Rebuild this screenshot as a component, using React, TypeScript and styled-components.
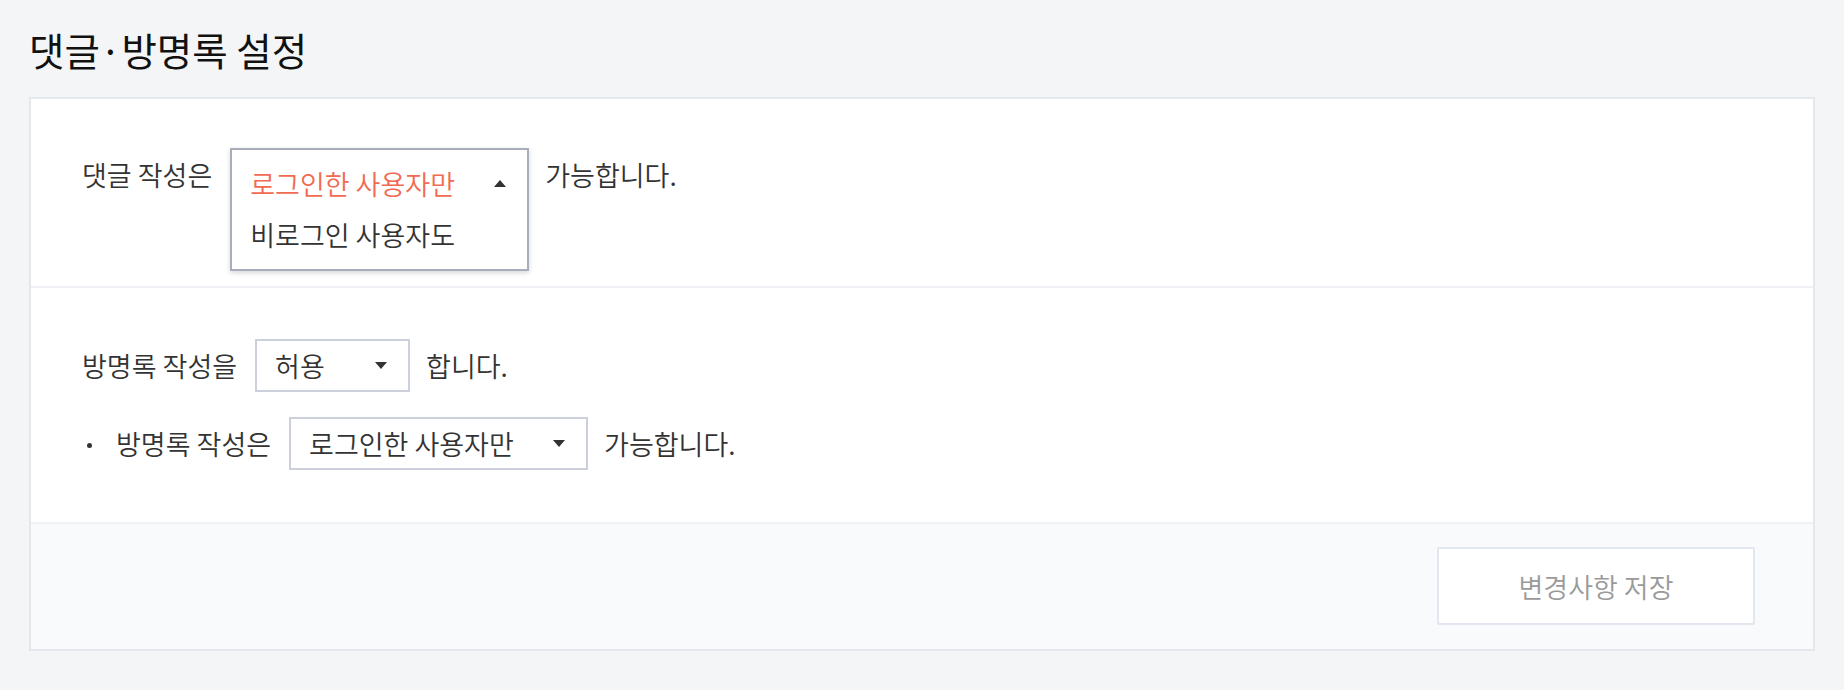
import React from 'react'
import styled, { createGlobalStyle } from 'styled-components'

const GlobalStyle = createGlobalStyle`
  html, body {
    margin: 0;
    padding: 0;
    background: #f4f5f7;
  }
  body {
    font-family: 'Noto Sans CJK KR', 'Noto Sans', sans-serif;
    font-weight: 350;
    color: #333;
  }
  * {
    box-sizing: border-box;
  }
`

const Page = styled.div`
  padding: 30px 29px 39px;
`

const Title = styled.h1`
  margin: 0 0 29px;
  font-size: 38.5px;
  line-height: 38px;
  font-weight: 400;
  color: #111;
`

const Card = styled.div`
  background: #fff;
  border: 2px solid #e4e7ed;
`

const Section = styled.div<{ $top: number; $bottom: number }>`
  padding: ${p => p.$top}px 51px ${p => p.$bottom}px;
  border-bottom: 2px solid #eff1f5;
`

const Row = styled.div<{ $gap?: number }>`
  display: flex;
  align-items: center;
  height: 53px;
  font-size: 27px;
  line-height: 1;
  color: #333;
  & + & {
    margin-top: ${p => p.$gap ?? 25}px;
  }
`

const Label = styled.span`
  margin-right: 18px;
  white-space: nowrap;
`

const After = styled.span`
  margin-left: 16px;
  white-space: nowrap;
`

const Bullet = styled.span`
  position: relative;
  width: 34px;
  height: 53px;
  flex: none;
  &::before {
    content: '';
    position: absolute;
    left: 5px;
    top: 26px;
    width: 5px;
    height: 5px;
    border-radius: 50%;
    background: #333;
  }
`

const SelectBox = styled.div<{ $width: number }>`
  display: flex;
  align-items: center;
  justify-content: space-between;
  width: ${p => p.$width}px;
  height: 53px;
  padding: 0 21px 0 18px;
  border: 2px solid #cbd0da;
  background: #fff;
  color: #333;
  white-space: nowrap;
  flex: none;
`

const SelectWrap = styled.div<{ $width: number }>`
  position: relative;
  width: ${p => p.$width}px;
  height: 53px;
  flex: none;
`

const OptionList = styled.ul`
  position: absolute;
  top: 0;
  left: 0;
  right: 0;
  margin: 0;
  padding: 8px 0 9px;
  list-style: none;
  background: #fff;
  border: 2px solid #a8adba;
  box-shadow: 0 2px 5px rgba(0, 0, 0, 0.16);
  z-index: 2;
`

const Option = styled.li<{ $active?: boolean }>`
  display: flex;
  align-items: center;
  justify-content: space-between;
  height: 51px;
  padding: 0 21px 0 18px;
  color: ${p => (p.$active ? '#f26a51' : '#333')};
  white-space: nowrap;
`

const Footer = styled.div`
  display: flex;
  justify-content: flex-end;
  padding: 23px 58px 24px;
  background: #f9fafc;
`

const SaveButton = styled.button`
  width: 318px;
  height: 78px;
  border: 2px solid #e2e6ee;
  border-radius: 2px;
  background: #fff;
  color: #9a9a9a;
  font-family: inherit;
  font-weight: inherit;
  font-size: 27px;
  cursor: default;
`

const Caret = ({ up }: { up?: boolean }) => (
  <svg width="12" height="7" viewBox="0 0 12 7" style={{ flex: 'none' }}>
    {up ? <path d="M6 0 L12 7 L0 7 Z" fill="#333" /> : <path d="M0 0 L12 0 L6 7 Z" fill="#333" />}
  </svg>
)

const App = () => {
  return (
    <>
      <GlobalStyle />
      <Page>
        <Title>댓글·방명록 설정</Title>
        <Card>
          <Section $top={49} $bottom={85}>
            <Row>
              <Label>댓글 작성은</Label>
              <SelectWrap $width={299}>
                <OptionList>
                  <Option $active>
                    로그인한 사용자만
                    <Caret up />
                  </Option>
                  <Option>비로그인 사용자도</Option>
                </OptionList>
              </SelectWrap>
              <After>가능합니다.</After>
            </Row>
          </Section>
          <Section $top={51} $bottom={52}>
            <Row>
              <Label>방명록 작성을</Label>
              <SelectBox $width={155}>
                허용
                <Caret />
              </SelectBox>
              <After>합니다.</After>
            </Row>
            <Row>
              <Bullet />
              <Label>방명록 작성은</Label>
              <SelectBox $width={299}>
                로그인한 사용자만
                <Caret />
              </SelectBox>
              <After>가능합니다.</After>
            </Row>
          </Section>
          <Footer>
            <SaveButton>변경사항 저장</SaveButton>
          </Footer>
        </Card>
      </Page>
    </>
  )
}

export default App
